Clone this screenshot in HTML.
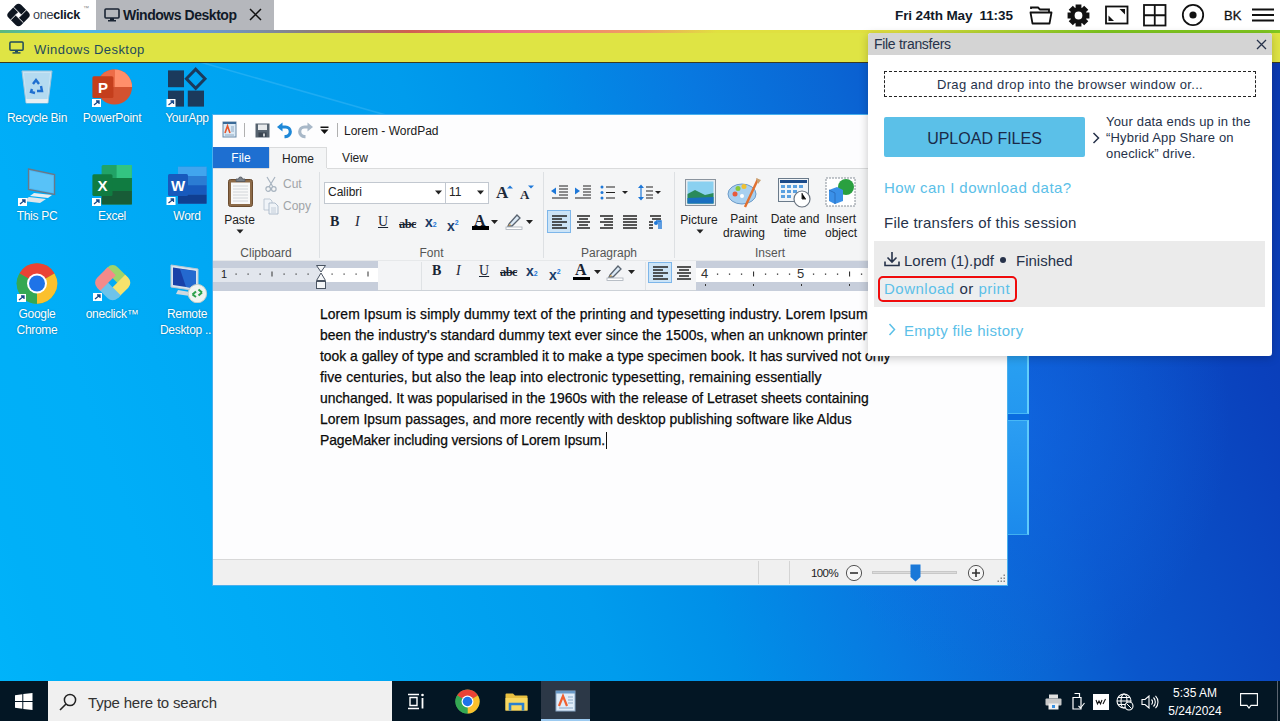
<!DOCTYPE html>
<html><head><meta charset="utf-8">
<style>
*{margin:0;padding:0;box-sizing:border-box}
html,body{width:1280px;height:721px;overflow:hidden}
body{position:relative;font-family:"Liberation Sans",sans-serif;background:#0a7ae0}
.a{position:absolute}
#wall{left:0;top:0;width:1280px;height:721px;background:radial-gradient(ellipse 220px 260px at 1010px 420px,rgba(20,110,235,.55),rgba(20,110,235,0) 100%),linear-gradient(70deg,#00b4fa 0%,#00b0f8 5%,#00aef8 13%,#00a8f4 24%,#009ced 41%,#0090e8 49%,#0878e0 60%,#0a66d4 69%,#0a56cc 75%,#0a4cc4 82%,#0a40bc 90%,#0a38b0 100%)}
#top{left:0;top:0;width:1280px;height:30px;background:#fff}
#stripe{left:0;top:30px;width:1280px;height:3px;background:linear-gradient(90deg,#5cb87a 0%,#4cb8e8 6%,#6a9ad0 16%,#8a8080 24%,#d06050 32%,#f07080 40%,#f0a060 50%,#e0e040 56%,#e0e040 70%,#80c820 86%,#80c820 100%)}
#ybar{left:0;top:33px;width:1280px;height:29px;background:#dfe444}
#yline{left:0;top:62px;width:1280px;height:1px;background:#3a3a20}
.lbl{color:#fff;font-size:12px;text-align:center;text-shadow:0 0 2px rgba(0,0,0,.35);line-height:16px;letter-spacing:-0.3px;margin-top:1px}
</style></head>
<body>
<div id="wall" class="a"></div>
<div id="top" class="a"></div>
<div id="stripe" class="a"></div>
<div id="ybar" class="a"></div>
<div id="yline" class="a"></div>


<!-- DESKTOP ICONS -->
<!-- recycle bin -->
<svg class="a" style="left:20px;top:69px" width="34" height="36" viewBox="0 0 34 36">
 <path d="M2 2H32L28 34H6Z" fill="#c8e4f4" stroke="#9cc4dc" stroke-width="1"/>
 <path d="M4 4H30L27 32H7Z" fill="#b4daf0"/>
 <path d="M6 30H28L27.5 34H6.5Z" fill="#e6eef2"/>
 <g fill="none" stroke="#1f6fd0" stroke-width="2.4"><path d="M13 15L16 11L19 15"/><path d="M21 17L22 22H17"/><path d="M12 20L11 23L15 24"/></g>
</svg>
<div class="a lbl" style="left:0;top:109px;width:74px">Recycle Bin</div>
<!-- powerpoint -->
<svg class="a" style="left:90px;top:68px" width="46" height="42" viewBox="0 0 46 42">
 <circle cx="24.5" cy="19" r="17.6" fill="#d35230"/>
 <path d="M24.5 1.4A17.6 17.6 0 0 1 42.1 19H24.5Z" fill="#ff8f6b"/>
 <path d="M24.5 1.4A17.6 17.6 0 0 0 6.9 19H24.5Z" fill="#ed6c47"/>
 <rect x="2.4" y="8.3" width="21" height="21.8" rx="1.5" fill="#c43e1c"/>
 <text x="12.9" y="25" font-family="Liberation Sans" font-weight="bold" font-size="15" fill="#fff" text-anchor="middle">P</text>
 <rect x="2" y="31" width="9" height="8" fill="#fff"/><path d="M4 37L9 33M6 33H9V36" stroke="#1a4a8a" stroke-width="1.3" fill="none"/>
</svg>
<div class="a lbl" style="left:75px;top:109px;width:74px">PowerPoint</div>
<!-- yourapp -->
<svg class="a" style="left:166px;top:67px" width="42" height="42" viewBox="0 0 42 42">
 <rect x="2" y="3.4" width="16" height="16.8" fill="#1b3a5c"/>
 <rect x="2" y="23.6" width="16" height="16" fill="#1b3a5c"/>
 <rect x="21.8" y="23.6" width="16.2" height="16" fill="#1b3a5c"/>
 <path d="M29.7 2.2L39 11.8L29.7 21.4L20.4 11.8Z" fill="none" stroke="#1b3a5c" stroke-width="3"/>
 <rect x="0.5" y="32" width="9" height="8" fill="#fff"/><path d="M2.5 38L7.5 34M4.5 34H7.5V37" stroke="#1a4a8a" stroke-width="1.3" fill="none"/>
</svg>
<div class="a lbl" style="left:150px;top:109px;width:74px">YourApp</div>
<!-- this pc -->
<svg class="a" style="left:16px;top:167px" width="42" height="40" viewBox="0 0 42 40">
 <path d="M12.5 2L38.6 7.5V27.5L12.5 22.5Z" fill="#4ab8f4" stroke="#6a7888" stroke-width="1.3"/>
 <path d="M14 4L37 8.8V25.8L14 21Z" fill="#58c2f8"/>
 <path d="M18 26L36 28L32 31L14 29Z" fill="#e8eef2"/>
 <path d="M13 30L30 32L24 36L7 34Z" fill="#dfe6ea"/>
 <rect x="2" y="31" width="9" height="8" fill="#fff"/><path d="M4 37L9 33M6 33H9V36" stroke="#1a4a8a" stroke-width="1.3" fill="none"/>
</svg>
<div class="a lbl" style="left:0;top:207px;width:74px">This PC</div>
<!-- excel -->
<svg class="a" style="left:90px;top:164px" width="46" height="44" viewBox="0 0 46 44">
 <rect x="11.6" y="1" width="30.3" height="39.5" rx="1.5" fill="#21a366"/>
 <rect x="26.6" y="1" width="15.3" height="13" fill="#33c481"/>
 <rect x="11.6" y="14" width="30.3" height="13" fill="#107c41"/>
 <rect x="11.6" y="27" width="30.3" height="13.5" fill="#185c37"/>
 <rect x="2.4" y="10.3" width="20.1" height="21.8" rx="1.5" fill="#107c41"/>
 <text x="12.4" y="27" font-family="Liberation Sans" font-weight="bold" font-size="15" fill="#fff" text-anchor="middle">X</text>
 <rect x="2" y="34" width="9" height="8" fill="#fff"/><path d="M4 40L9 36M6 36H9V39" stroke="#1a4a8a" stroke-width="1.3" fill="none"/>
</svg>
<div class="a lbl" style="left:75px;top:207px;width:74px">Excel</div>
<!-- word -->
<svg class="a" style="left:166px;top:165px" width="44" height="42" viewBox="0 0 44 42">
 <rect x="12" y="1.7" width="28.6" height="37" rx="1.5" fill="#2b7cd3"/>
 <rect x="12" y="1.7" width="28.6" height="9.3" fill="#41a5ee"/>
 <rect x="12" y="11" width="28.6" height="9.3" fill="#2b7cd3"/>
 <rect x="12" y="20.3" width="28.6" height="9.3" fill="#185abd"/>
 <rect x="12" y="29.6" width="28.6" height="9.1" fill="#103f91"/>
 <rect x="2" y="9" width="20" height="22" rx="1.5" fill="#185abd"/>
 <text x="12" y="26" font-family="Liberation Sans" font-weight="bold" font-size="15" fill="#fff" text-anchor="middle">W</text>
 <rect x="0.5" y="32" width="9" height="8" fill="#fff"/><path d="M2.5 38L7.5 34M4.5 34H7.5V37" stroke="#1a4a8a" stroke-width="1.3" fill="none"/>
</svg>
<div class="a lbl" style="left:150px;top:207px;width:74px">Word</div>
<!-- chrome -->
<svg class="a" style="left:16px;top:263px" width="42" height="42" viewBox="0 0 42 42">
 <circle cx="21" cy="20.5" r="20.2" fill="#4caf50"/>
 <path d="M21 20.5L3.5 10.4A20.2 20.2 0 0 1 38.5 10.4Z" fill="#ea4335"/>
 <path d="M21 20.5L38.5 10.4A20.2 20.2 0 0 1 21 40.7Z" fill="#fbc02d"/>
 <path d="M21 20.5L21 40.7A20.2 20.2 0 0 1 3.5 10.4Z" fill="#34a853"/>
 <circle cx="21" cy="20.5" r="10" fill="#fff"/>
 <circle cx="21" cy="20.5" r="8" fill="#1e73e8"/>
 <rect x="1" y="31" width="9" height="8" fill="#fff"/><path d="M3 37L8 33M5 33H8V36" stroke="#1a4a8a" stroke-width="1.3" fill="none"/>
</svg>
<div class="a lbl" style="left:0;top:305px;width:74px">Google<br>Chrome</div>
<!-- oneclick colorful -->
<svg class="a" style="left:91px;top:262px" width="44" height="44" viewBox="0 0 44 44">
 <g transform="translate(21.7,20.7) rotate(45)">
  <path d="M-14.5 -3.2V-7.5A7 7 0 0 1 -7.5 -14.5H7.5V-3.2Z" fill="#9fd46a"/>
  <path d="M3.2 -14.5H7.5A7 7 0 0 1 14.5 -7.5V7.5H3.2Z" fill="#f6e26c"/>
  <path d="M14.5 3.2V7.5A7 7 0 0 1 7.5 14.5H-7.5V3.2Z" fill="#6ec3ea"/>
  <path d="M-3.2 14.5H-7.5A7 7 0 0 1 -14.5 7.5V-7.5H-3.2Z" fill="#f48a8a"/>
 </g>
 <rect x="2" y="31" width="9" height="8" fill="#fff"/><path d="M4 37L9 33M6 33H9V36" stroke="#1a4a8a" stroke-width="1.3" fill="none"/>
</svg>
<div class="a lbl" style="left:75px;top:305px;width:74px">oneclick™</div>
<!-- remote desktop -->
<svg class="a" style="left:168px;top:263px" width="42" height="40" viewBox="0 0 42 40">
 <path d="M3 2L30 6V28L3 24Z" fill="#d8e4ee" stroke="#b8c8d4" stroke-width="1"/>
 <path d="M5 4.5L28 8V25.5L5 22Z" fill="#1840a8"/>
 <path d="M12 6L28 8V25.5L18 24Z" fill="#2a7ae0" opacity=".7"/>
 <path d="M10 27L22 29V33L8 31Z" fill="#cfd8de"/>
 <circle cx="29.4" cy="30.6" r="9.2" fill="#f0f4f0" stroke="#c8d0c8"/>
 <path d="M24.5 31.5L28 28.5M24.5 31.5L28 34M34 29.5L30.5 26.5M34 29.5L30.5 32.5" stroke="#2da04a" stroke-width="2"/>
</svg>
<div class="a lbl" style="left:150px;top:305px;width:74px">Remote<br>Desktop ...</div>



<div class="a" style="left:990px;top:340px;width:39px;height:74px;background:linear-gradient(180deg,#2aa2f2,#2498f0);border-right:2px solid #62cefa;border-bottom:1px solid #48b8f6"></div>
<div class="a" style="left:1008px;top:414px;width:21px;height:6px;background:#0a6ce0"></div>
<div class="a" style="left:990px;top:420px;width:39px;height:115px;background:linear-gradient(180deg,#2c9ef2 0%,#2496f0 40%,#1c8aec 100%);border-right:2px solid #5ecafa;border-top:1px solid #48b8f6;border-bottom:1px solid #40b0f0"></div>
<svg class="a" style="left:200px;top:63px" width="220" height="60" viewBox="0 0 220 60"><path d="M0 -1L200 56" stroke="rgba(150,220,255,.2)" stroke-width="1.6"/></svg>
<!-- WORDPAD -->
<div class="a" style="left:212px;top:114px;width:796px;height:472px;background:#fdfdfe;border:1px solid #48b0ee"></div>
<!-- title bar icons -->
<svg class="a" style="left:222px;top:121px" width="15" height="17" viewBox="0 0 15 17">
 <rect x="1" y="1" width="13" height="15" fill="#dceaf6" stroke="#6a8aa8" stroke-width="1"/>
 <rect x="1" y="1" width="13" height="2" fill="#3a6a98"/>
 <path d="M3 12L5.5 5L8 12" stroke="#e8552a" stroke-width="1.6" fill="none"/>
 <path d="M9 6H12M9 8H12M9 10H12M3 14H12" stroke="#7a9ab8" stroke-width="0.8"/>
</svg>
<div class="a" style="left:244px;top:123px;width:1px;height:14px;background:#b0b0b0"></div>
<svg class="a" style="left:255px;top:123px" width="15" height="15" viewBox="0 0 15 15">
 <rect x="0.5" y="0.5" width="14" height="14" fill="#56626e"/>
 <rect x="3" y="1.5" width="9" height="5.5" fill="#e8eaec"/>
 <rect x="3.5" y="9.5" width="8" height="4.5" fill="#3a4450"/><rect x="8" y="10.5" width="2" height="3" fill="#c8ccd0"/>
</svg>
<svg class="a" style="left:277px;top:122px" width="15" height="17" viewBox="0 0 15 17"><path d="M4 5H8.5A4.8 4.8 0 0 1 8.5 14.6H7.5" fill="none" stroke="#1e88d8" stroke-width="3.2"/><path d="M0 5L5.5 0.5V9.5Z" fill="#1e88d8"/></svg>
<svg class="a" style="left:298px;top:122px" width="15" height="17" viewBox="0 0 15 17"><path d="M11 5H6.5A4.8 4.8 0 0 0 6.5 14.6H7.5" fill="none" stroke="#a8b8c8" stroke-width="3.2"/><path d="M15 5L9.5 0.5V9.5Z" fill="#a8b8c8"/></svg>
<svg class="a" style="left:320px;top:126px" width="9" height="9" viewBox="0 0 9 9"><rect x="0.5" y="0.5" width="8" height="1.5" fill="#111"/><path d="M0.5 3.5H8.5L4.5 8Z" fill="#111"/></svg>
<div class="a" style="left:337px;top:123px;width:1px;height:14px;background:#b0b0b0"></div>
<div class="a" style="left:344px;top:124px;font-size:12px;line-height:15px;color:#1a1a1a">Lorem - WordPad</div>
<!-- tabs -->
<div class="a" style="left:213px;top:147px;width:56px;height:23px;background:#1e6fd1;color:#fff;font-size:12px;line-height:23px;text-align:center">File</div>
<div class="a" style="left:269px;top:147px;width:58px;height:24px;background:#f4f5f6;border:1px solid #dadbdc;border-bottom:none;color:#222;font-size:12px;line-height:22px;text-align:center">Home</div>
<div class="a" style="left:327px;top:147px;width:56px;height:23px;color:#222;font-size:12px;line-height:23px;text-align:center">View</div>
<!-- ribbon -->
<div class="a" style="left:213px;top:168px;width:794px;height:93px;background:#f4f5f6;border-top:1px solid #dadbdc"></div>
<div class="a" style="left:327px;top:168px;width:680px;height:1px;background:#dadbdc"></div>
<div class="a" style="left:269px;top:168px;width:58px;height:2px;background:#f4f5f6"></div>
<div class="a" style="left:319px;top:172px;width:1px;height:86px;background:#dde0e3"></div>
<div class="a" style="left:543px;top:172px;width:1px;height:86px;background:#dde0e3"></div>
<div class="a" style="left:674px;top:172px;width:1px;height:86px;background:#dde0e3"></div>
<div class="a" style="left:213px;top:260px;width:794px;height:1px;background:#e6e8ea"></div>
<!-- clipboard -->
<svg class="a" style="left:227px;top:176px" width="27" height="32" viewBox="0 0 27 32">
 <rect x="1.5" y="3.5" width="24" height="27" rx="2" fill="#8c6a48" stroke="#6a4c30" stroke-width="1"/>
 <rect x="4" y="6.5" width="19" height="21.5" fill="#f8f8f8"/>
 <path d="M6 10H21M6 13H21M6 16H21M6 19H21M6 22H21M6 25H21" stroke="#c8ccd0" stroke-width="0.8"/>
 <path d="M9 5.5V3H11.5A2 2 0 0 1 15.5 3H18V5.5Z" fill="#7a8088" stroke="#50565e" stroke-width="0.8"/>
</svg>
<div class="a" style="left:213px;top:213px;width:53px;font-size:12px;line-height:14px;color:#222;text-align:center">Paste</div>
<svg class="a" style="left:236px;top:229px" width="8" height="5" viewBox="0 0 8 5"><path d="M0.5 0.5H7.5L4 4.5Z" fill="#222"/></svg>
<svg class="a" style="left:265px;top:176px" width="12" height="16" viewBox="0 0 12 16"><path d="M2 1L8 11M10 1L4 11" stroke="#a8b4c0" stroke-width="1.2"/><circle cx="3.2" cy="13" r="2.3" fill="none" stroke="#a8b4c0" stroke-width="1.2"/><circle cx="8.8" cy="13" r="2.3" fill="none" stroke="#a8b4c0" stroke-width="1.2"/></svg>
<div class="a" style="left:283px;top:177px;font-size:12px;line-height:14px;color:#a0a4a8">Cut</div>
<svg class="a" style="left:263px;top:198px" width="17" height="17" viewBox="0 0 17 17"><path d="M1 1H7L9 3V12H1Z" fill="#f0f4f8" stroke="#b8c4d0" stroke-width="0.9"/><path d="M6 5H12L15 8V16H6Z" fill="#f0f4f8" stroke="#a8b8c8" stroke-width="0.9"/><path d="M8 10H13M8 12H13M8 14H13" stroke="#b8c4d0" stroke-width="0.8"/></svg>
<div class="a" style="left:283px;top:199px;font-size:12px;line-height:14px;color:#a0a4a8">Copy</div>
<div class="a" style="left:213px;top:246px;width:106px;font-size:12px;line-height:14px;color:#555;text-align:center">Clipboard</div>
<!-- font -->
<div class="a" style="left:324px;top:182px;width:122px;height:22px;background:#fff;border:1px solid #c2c8d0"></div>
<div class="a" style="left:445px;top:182px;width:44px;height:22px;background:#fff;border:1px solid #c2c8d0"></div>
<div class="a" style="left:328px;top:185px;font-size:12px;line-height:15px;color:#222">Calibri</div>
<div class="a" style="left:449px;top:185px;font-size:12px;line-height:15px;color:#222">11</div>
<svg class="a" style="left:435px;top:190px" width="7" height="5" viewBox="0 0 7 5"><path d="M0 0.5H7L3.5 4.5Z" fill="#222"/></svg>
<svg class="a" style="left:477px;top:190px" width="7" height="5" viewBox="0 0 7 5"><path d="M0 0.5H7L3.5 4.5Z" fill="#222"/></svg>
<div class="a" style="left:496px;top:183px;font-family:'Liberation Serif',serif;font-weight:bold;font-size:17px;line-height:20px;color:#1e2a3a">A</div>
<svg class="a" style="left:507px;top:185px" width="6" height="4" viewBox="0 0 6 4"><path d="M0 3.5L3 0.5L6 3.5Z" fill="#1e78d8"/></svg>
<div class="a" style="left:520px;top:187px;font-family:'Liberation Serif',serif;font-weight:bold;font-size:13px;line-height:16px;color:#1e2a3a">A</div>
<svg class="a" style="left:528px;top:185px" width="6" height="4" viewBox="0 0 6 4"><path d="M0 0.5H6L3 3.5Z" fill="#1e78d8"/></svg>
<div class="a" style="left:330px;top:214px;font-family:'Liberation Serif',serif;font-weight:bold;font-size:14px;line-height:16px;color:#1a2433">B</div>
<div class="a" style="left:355px;top:214px;font-family:'Liberation Serif',serif;font-style:italic;font-size:14px;line-height:16px;color:#1a2433">I</div>
<div class="a" style="left:378px;top:214px;font-family:'Liberation Serif',serif;font-size:14px;line-height:16px;color:#1a2433;text-decoration:underline">U</div>
<div class="a" style="left:399px;top:217px;font-family:'Liberation Serif',serif;font-weight:bold;font-size:12.5px;line-height:14px;color:#1a2433;text-decoration:line-through;letter-spacing:-0.6px">abc</div>
<div class="a" style="left:425px;top:215px;font-size:14px;line-height:15px;font-weight:bold;color:#1a3a66">x<span style="font-size:7px;color:#1e78d8">2</span></div>
<div class="a" style="left:447px;top:215px;font-size:14px;line-height:15px;font-weight:bold;color:#1a3a66">x<span style="font-size:7px;color:#1e78d8;vertical-align:6px">2</span></div>
<div class="a" style="left:474px;top:213px;font-family:'Liberation Serif',serif;font-weight:bold;font-size:16px;line-height:16px;color:#1a2433">A</div>
<div class="a" style="left:472px;top:226px;width:17px;height:3.5px;background:#000"></div>
<svg class="a" style="left:491px;top:220px" width="7" height="4" viewBox="0 0 7 4"><path d="M0 0H7L3.5 4Z" fill="#222"/></svg>
<svg class="a" style="left:505px;top:213px" width="18" height="17" viewBox="0 0 18 17"><path d="M4 11L12 2L15 5L7 13L3 13Z" fill="#dceaf6" stroke="#5a6470" stroke-width="1.3"/><path d="M3 13L5 11L6 12Z" fill="#e8a030"/><rect x="1" y="14" width="16" height="2.5" fill="#fff" stroke="#a8b0b8" stroke-width="0.8"/></svg>
<svg class="a" style="left:526px;top:220px" width="7" height="4" viewBox="0 0 7 4"><path d="M0 0H7L3.5 4Z" fill="#222"/></svg>
<div class="a" style="left:320px;top:246px;width:223px;font-size:12px;line-height:14px;color:#555;text-align:center">Font</div>
<!-- paragraph -->
<svg class="a" style="left:550px;top:184px" width="120" height="17" viewBox="0 0 120 17">
 <g stroke="#222" stroke-width="1.2"><path d="M9 2H18M9 5H18M9 8H18M9 11H18M2 14H18"/></g><path d="M1 7L6 3.5V10.5Z" fill="#1e78d8"/>
 <g stroke="#222" stroke-width="1.2"><path d="M33 2H41M33 5H41M33 8H41M33 11H41M25 14H41"/></g><path d="M30 7L25 3.5V10.5Z" fill="#1e78d8"/>
 <g fill="#1e78d8"><circle cx="52" cy="3" r="1.5"/><circle cx="52" cy="8.5" r="1.5"/><circle cx="52" cy="14" r="1.5"/></g>
 <g stroke="#222" stroke-width="1.2"><path d="M56 3H65M56 8.5H65M56 14H65"/></g><path d="M72 7H78L75 10Z" fill="#222"/>
 <path d="M91 0.5L94 4H88Z M91 16.5L94 13H88Z" fill="#1e78d8"/><path d="M91 3V14" stroke="#1e78d8" stroke-width="1.2"/>
 <g stroke="#222" stroke-width="1.2"><path d="M96 3H103M96 7H103M96 11H103M96 14H103"/></g><path d="M105 7H111L108 10Z" fill="#222"/>
</svg>
<div class="a" style="left:547px;top:210px;width:24px;height:23px;background:#cce4f7;border:1px solid #7db6ea"></div>
<svg class="a" style="left:550px;top:214px" width="115" height="15" viewBox="0 0 115 15">
 <g stroke="#222" stroke-width="1.3">
  <path d="M2 2H17M2 5H12M2 8H17M2 11H12M2 14H17"/>
  <path d="M27 2H40M29 5H38M27 8H40M29 11H38M27 14H40"/>
  <path d="M50 2H63M54 5H63M50 8H63M54 11H63M50 14H63"/>
  <path d="M73 2H87M73 5H87M73 8H87M73 11H87M73 14H87"/>
  <path d="M100 2H111M102 5H111M99 8H103M99 11H103M99 14H103"/>
 </g>
 <path d="M106 7H111V15M109 7V15" stroke="#1e78d8" stroke-width="1.4" fill="none"/><circle cx="106" cy="9" r="2" fill="#1e78d8"/>
</svg>
<div class="a" style="left:544px;top:246px;width:130px;font-size:12px;line-height:14px;color:#555;text-align:center">Paragraph</div>
<!-- insert -->
<svg class="a" style="left:685px;top:179px" width="31" height="27" viewBox="0 0 31 27">
 <rect x="0.5" y="0.5" width="30" height="26" fill="#e8ecf0" stroke="#8a949e"/>
 <rect x="2.5" y="2.5" width="26" height="22" fill="#8ad0f0"/>
 <path d="M2.5 15L10 11L20 16L28.5 14V24.5H2.5Z" fill="#2a8a5a"/>
 <path d="M2.5 19L28.5 18V24.5H2.5Z" fill="#1a70c0"/>
</svg>
<svg class="a" style="left:727px;top:177px" width="35" height="32" viewBox="0 0 35 32">
 <ellipse cx="15" cy="17" rx="14" ry="10" fill="#a8d0f0" stroke="#6a9ac8"/>
 <circle cx="8" cy="17" r="2.5" fill="#e85a3a"/><circle cx="11" cy="11.5" r="2.5" fill="#8ac838"/><circle cx="17" cy="9.5" r="2.5" fill="#f0c030"/><circle cx="15" cy="19" r="2" fill="#fff"/>
 <path d="M31 2L18 30" stroke="#e07030" stroke-width="2.4"/><path d="M29 1L34 3L31 7Z" fill="#c8a070"/>
</svg>
<svg class="a" style="left:778px;top:178px" width="33" height="30" viewBox="0 0 33 30">
 <rect x="0.5" y="0.5" width="30" height="23" fill="#f0f4f8" stroke="#6a7a8a"/>
 <rect x="2" y="2" width="27" height="3" fill="#1a4a8a"/>
 <g fill="#5aa0e0"><rect x="3" y="7" width="4" height="3"/><rect x="9" y="7" width="4" height="3"/><rect x="15" y="7" width="4" height="3"/><rect x="21" y="7" width="4" height="3"/><rect x="3" y="12" width="4" height="3"/><rect x="9" y="12" width="4" height="3"/><rect x="15" y="12" width="4" height="3"/><rect x="3" y="17" width="4" height="3"/><rect x="9" y="17" width="4" height="3"/></g>
 <circle cx="24" cy="21" r="8" fill="#fff" stroke="#6a7480" stroke-width="1.2"/><path d="M24 15V21H28" stroke="#333" stroke-width="1"/>
</svg>
<svg class="a" style="left:825px;top:177px" width="32" height="30" viewBox="0 0 32 30">
 <rect x="1" y="1" width="29" height="28" fill="#fff" stroke="#6a7480" stroke-width="0.8" stroke-dasharray="2,1"/>
 <circle cx="21" cy="10" r="8" fill="#2aa040"/>
 <path d="M4 13L12 10L18 13V24L10 27L4 24Z" fill="#3a90e8"/><path d="M4 13L10 16V27" stroke="#2a70c0" fill="none"/>
</svg>
<div class="a" style="left:676px;top:213px;width:46px;font-size:12px;line-height:14px;color:#222;text-align:center">Picture</div>
<svg class="a" style="left:696px;top:229px" width="8" height="5" viewBox="0 0 8 5"><path d="M0.5 0.5H7.5L4 4.5Z" fill="#222"/></svg>
<div class="a" style="left:719px;top:213px;width:50px;font-size:12px;line-height:13.5px;color:#222;text-align:center">Paint<br>drawing</div>
<div class="a" style="left:767px;top:213px;width:56px;font-size:12px;line-height:13.5px;color:#222;text-align:center">Date and<br>time</div>
<div class="a" style="left:818px;top:213px;width:46px;font-size:12px;line-height:13.5px;color:#222;text-align:center">Insert<br>object</div>
<div class="a" style="left:675px;top:246px;width:190px;font-size:12px;line-height:14px;color:#555;text-align:center">Insert</div>
<!-- ruler -->
<div class="a" style="left:213px;top:261px;width:655px;height:30px;background:#c7cedb"></div>
<div class="a" style="left:213px;top:268px;width:107px;height:14px;background:#e2e6ed"></div>
<div class="a" style="left:320px;top:268px;width:548px;height:14px;background:#fff"></div>


<!-- ruler ticks left -->
<div class="a" style="left:221px;top:267px;font-size:11px;line-height:14px;color:#222">1</div>
<svg class="a" style="left:213px;top:261px" width="655" height="30" viewBox="0 0 655 30">
 <g fill="#333">
  <rect x="22.5" y="12.5" width="1.2" height="1.2"/><rect x="34.5" y="12.5" width="1.2" height="1.2"/><rect x="46.5" y="12.5" width="1.2" height="1.2"/>
  <rect x="58.5" y="10.5" width="1" height="5"/>
  <rect x="70.5" y="12.5" width="1.2" height="1.2"/><rect x="82.5" y="12.5" width="1.2" height="1.2"/><rect x="94.5" y="12.5" width="1.2" height="1.2"/>
  <rect x="118.5" y="12.5" width="1.2" height="1.2"/><rect x="130.5" y="12.5" width="1.2" height="1.2"/><rect x="142.5" y="12.5" width="1.2" height="1.2"/>
  <rect x="154.5" y="10.5" width="1" height="5"/>
 </g>
 <g fill="#f4f6f8" stroke="#4a5462" stroke-width="1">
  <path d="M103.5 4.5H112.5L108 11Z"/><path d="M103.5 19.5L108 12L112.5 19.5Z"/><rect x="103.5" y="20.5" width="9" height="7"/>
 </g>
</svg>
<!-- mini toolbar -->
<div class="a" style="left:378px;top:261px;width:318px;height:30px;background:#f3f4f6;border-bottom:1px solid #cdd2d8"></div>
<div class="a" style="left:421px;top:262px;width:1px;height:28px;background:#dfe2e5"></div>
<div class="a" style="left:645px;top:262px;width:1px;height:28px;background:#dfe2e5"></div>
<div class="a" style="left:432px;top:263px;font-family:'Liberation Serif',serif;font-weight:bold;font-size:14px;line-height:16px;color:#1a2433">B</div>
<div class="a" style="left:456px;top:263px;font-family:'Liberation Serif',serif;font-style:italic;font-size:14px;line-height:16px;color:#1a2433">I</div>
<div class="a" style="left:479px;top:263px;font-family:'Liberation Serif',serif;font-size:14px;line-height:16px;color:#1a2433;text-decoration:underline">U</div>
<div class="a" style="left:500px;top:265px;font-family:'Liberation Serif',serif;font-weight:bold;font-size:12.5px;line-height:14px;color:#1a2433;text-decoration:line-through;letter-spacing:-0.6px">abc</div>
<div class="a" style="left:526px;top:264px;font-size:14px;line-height:15px;font-weight:bold;color:#1a3a66">x<span style="font-size:7px;color:#1e78d8">2</span></div>
<div class="a" style="left:549px;top:264px;font-size:14px;line-height:15px;font-weight:bold;color:#1a3a66">x<span style="font-size:7px;color:#1e78d8;vertical-align:6px">2</span></div>
<div class="a" style="left:575px;top:262px;font-family:'Liberation Serif',serif;font-weight:bold;font-size:16px;line-height:16px;color:#1a2433">A</div>
<div class="a" style="left:573px;top:277px;width:17px;height:3px;background:#000"></div>
<svg class="a" style="left:594px;top:270px" width="7" height="4" viewBox="0 0 7 4"><path d="M0 0H7L3.5 4Z" fill="#222"/></svg>
<svg class="a" style="left:606px;top:264px" width="18" height="17" viewBox="0 0 18 17"><path d="M4 11L12 2L15 5L7 13L3 13Z" fill="#dceaf6" stroke="#5a6470" stroke-width="1.3"/><path d="M3 13L5 11L6 12Z" fill="#e8a030"/><rect x="1" y="14" width="16" height="2.5" fill="#fff" stroke="#a8b0b8" stroke-width="0.8"/></svg>
<svg class="a" style="left:628px;top:270px" width="7" height="4" viewBox="0 0 7 4"><path d="M0 0H7L3.5 4Z" fill="#222"/></svg>
<div class="a" style="left:648px;top:262px;width:24px;height:21px;background:#cce4f7;border:1px solid #7db6ea"></div>
<svg class="a" style="left:651px;top:265px" width="42" height="15" viewBox="0 0 42 15">
 <g stroke="#222" stroke-width="1.3"><path d="M2 2H17M2 5H12M2 8H17M2 11H12M2 14H17"/><path d="M26 2H40M28 5H38M26 8H40M28 11H38M26 14H40"/></g>
</svg>
<!-- ruler right -->
<svg class="a" style="left:696px;top:261px" width="172" height="30" viewBox="0 0 172 30"><g fill="#333"><rect x="20.9" y="12.5" width="1.3" height="1.3"/><rect x="32.9" y="12.5" width="1.3" height="1.3"/><rect x="44.9" y="12.5" width="1.3" height="1.3"/><rect x="68.9" y="12.5" width="1.3" height="1.3"/><rect x="80.9" y="12.5" width="1.3" height="1.3"/><rect x="92.9" y="12.5" width="1.3" height="1.3"/><rect x="116.9" y="12.5" width="1.3" height="1.3"/><rect x="128.9" y="12.5" width="1.3" height="1.3"/><rect x="140.9" y="12.5" width="1.3" height="1.3"/><rect x="164.9" y="12.5" width="1.3" height="1.3"/><rect x="57.0" y="10.5" width="1.1" height="5"/><rect x="153.0" y="10.5" width="1.1" height="5"/><rect x="9.0" y="23" width="1" height="2"/><rect x="57.0" y="23" width="1" height="2"/><rect x="105.0" y="23" width="1" height="2"/><rect x="153.0" y="23" width="1" height="2"/></g></svg>
<div class="a" style="left:701px;top:267px;font-size:13px;line-height:14px;color:#333">4</div>
<div class="a" style="left:797px;top:267px;font-size:13px;line-height:14px;color:#333">5</div>
<!-- document -->
<div class="a" id="doc" style="left:320px;top:304px;font-size:13.9px;line-height:21px;color:#0a0a0a;white-space:pre;-webkit-text-stroke:0.25px #0a0a0a"><div style="letter-spacing:0.086px">Lorem Ipsum is simply dummy text of the printing and typesetting industry. Lorem Ipsum has</div><div style="letter-spacing:0.028px">been the industry&#39;s standard dummy text ever since the 1500s, when an unknown printer</div><div style="letter-spacing:-0.010px">took a galley of type and scrambled it to make a type specimen book. It has survived not only</div><div style="letter-spacing:0.144px">five centuries, but also the leap into electronic typesetting, remaining essentially</div><div style="letter-spacing:-0.022px">unchanged. It was popularised in the 1960s with the release of Letraset sheets containing</div><div style="letter-spacing:0.025px">Lorem Ipsum passages, and more recently with desktop publishing software like Aldus</div><div style="letter-spacing:-0.103px">PageMaker including versions of Lorem Ipsum.<span style="display:inline-block;width:1px;height:17px;background:#111;vertical-align:-4px;margin-left:1px"></span></div></div>
<!-- status bar -->
<div class="a" style="left:213px;top:559px;width:794px;height:26px;background:#f0f0f0;border-top:1px solid #d8d8d8"></div>
<div class="a" style="left:758px;top:561px;width:1px;height:23px;background:#d4d4d4"></div>
<div class="a" style="left:789px;top:561px;width:1px;height:23px;background:#d4d4d4"></div>
<div class="a" style="left:811px;top:566px;font-size:11.5px;line-height:14px;color:#222;letter-spacing:-0.6px">100%</div>
<svg class="a" style="left:845px;top:564px" width="18" height="18" viewBox="0 0 18 18"><circle cx="9" cy="9" r="7.6" fill="#f6f6f6" stroke="#555" stroke-width="1"/><path d="M5 9H13" stroke="#333" stroke-width="1.6"/></svg>
<div class="a" style="left:872px;top:571px;width:85px;height:3px;background:#dcdcdc;border:1px solid #c8c8c8"></div>
<svg class="a" style="left:910px;top:564px" width="11" height="18" viewBox="0 0 11 18"><path d="M0.5 0.5H10.5V13L5.5 17.5L0.5 13Z" fill="#1a78d8"/></svg>
<svg class="a" style="left:967px;top:564px" width="18" height="18" viewBox="0 0 18 18"><circle cx="9" cy="9" r="7.6" fill="#f6f6f6" stroke="#555" stroke-width="1"/><path d="M5 9H13M9 5V13" stroke="#333" stroke-width="1.6"/></svg>
<svg class="a" style="left:997px;top:574px" width="9" height="9" viewBox="0 0 9 9"><g fill="#888"><rect x="6.5" y="0.5" width="1.5" height="1.5"/><rect x="3.5" y="3.5" width="1.5" height="1.5"/><rect x="6.5" y="3.5" width="1.5" height="1.5"/><rect x="0.5" y="6.5" width="1.5" height="1.5"/><rect x="3.5" y="6.5" width="1.5" height="1.5"/><rect x="6.5" y="6.5" width="1.5" height="1.5"/></g></svg>


<!-- PANEL -->
<div class="a" style="left:868px;top:33px;width:404px;height:323px;background:#fff;border-radius:3px;box-shadow:0 2px 10px rgba(0,0,0,.22);overflow:hidden">
 <div class="a" style="left:0;top:0;width:404px;height:22px;background:#d4d4d4"></div>
</div>
<div class="a" style="left:874px;top:36px;font-size:14px;line-height:16px;color:#26324a;letter-spacing:-0.3px">File transfers</div>
<svg class="a" style="left:1256px;top:39px" width="11" height="11" viewBox="0 0 11 11"><path d="M1 1L10 10M10 1L1 10" stroke="#26324a" stroke-width="1.3"/></svg>
<div class="a" style="left:884px;top:71px;width:372px;height:26px;border:1.5px dashed #222"></div>
<div class="a" style="left:884px;top:77px;width:372px;text-align:center;font-size:13px;line-height:16px;color:#26324a;letter-spacing:0.34px">Drag and drop into the browser window or...</div>
<div class="a" style="left:884px;top:117px;width:201px;height:40px;background:#5bc0e8;border-radius:2px;color:#1a2a48;font-size:16px;line-height:44px;text-align:center">UPLOAD FILES</div>
<svg class="a" style="left:1092px;top:132px" width="8" height="12" viewBox="0 0 8 12"><path d="M1.5 1L6.5 6L1.5 11" fill="none" stroke="#26324a" stroke-width="1.5"/></svg>
<div class="a" style="left:1106px;top:114px;font-size:13px;line-height:16px;color:#26324a;letter-spacing:0.17px">Your data ends up in the<br>“Hybrid App Share on<br>oneclick” drive.</div>
<div class="a" style="left:884px;top:179px;font-size:15px;line-height:18px;color:#5bc0e8;letter-spacing:0.45px">How can I download data?</div>
<div class="a" style="left:884px;top:214px;font-size:15px;line-height:18px;color:#26324a;letter-spacing:0.22px">File transfers of this session</div>
<div class="a" style="left:874px;top:241px;width:391px;height:66px;background:#ebebeb"></div>
<svg class="a" style="left:884px;top:251px" width="16" height="16" viewBox="0 0 16 16"><path d="M8 1V11M3.5 6.5L8 11L12.5 6.5" fill="none" stroke="#26324a" stroke-width="1.6"/><path d="M1 10.5V14.5H15V10.5" fill="none" stroke="#26324a" stroke-width="1.6"/></svg>
<div class="a" style="left:904px;top:252px;font-size:15px;line-height:18px;color:#26324a;white-space:pre">Lorem (1).pdf</div>
<div class="a" style="left:1000px;top:257px;width:6px;height:6px;border-radius:3px;background:#26324a"></div>
<div class="a" style="left:1016px;top:252px;font-size:15px;line-height:18px;color:#26324a">Finished</div>
<div class="a" style="left:878px;top:276px;width:139px;height:26px;border:2.6px solid #f00c0c;border-radius:5px;background:#eceeef;box-shadow:0 0 0 1px #e4f4f8"></div>
<div class="a" style="left:884px;top:280px;font-size:15px;line-height:18px;color:#5bc0e8;white-space:pre;letter-spacing:0.5px">Download <span style="color:#26324a">or</span> print</div>
<svg class="a" style="left:888px;top:323px" width="8" height="13" viewBox="0 0 8 13"><path d="M1.5 1L6.5 6.5L1.5 12" fill="none" stroke="#5bc0e8" stroke-width="1.5"/></svg>
<div class="a" style="left:904px;top:322px;font-size:15px;line-height:18px;color:#5bc0e8;letter-spacing:0.29px">Empty file history</div>
<!-- Win logo panes -->

<!-- TASKBAR -->
<div class="a" style="left:0;top:681px;width:1280px;height:40px;background:#031624"></div>
<svg class="a" style="left:15px;top:693px" width="18" height="17" viewBox="0 0 18 17"><path d="M0 2.3L7.3 1.3V8H0Z M8.3 1.1L17.5 0V8H8.3Z M0 9H7.3V15.7L0 14.7Z M8.3 9H17.5V17L8.3 15.9Z" fill="#fff"/></svg>
<div class="a" style="left:48px;top:681px;width:344px;height:40px;background:#f0f0f0"></div>
<svg class="a" style="left:59px;top:693px" width="18" height="18" viewBox="0 0 18 18"><circle cx="11" cy="7" r="5.6" fill="none" stroke="#222" stroke-width="1.5"/><path d="M7 11L1 17" stroke="#222" stroke-width="1.6"/></svg>
<div class="a" style="left:88px;top:694px;font-size:15px;line-height:18px;color:#333;letter-spacing:-0.2px">Type here to search</div>
<svg class="a" style="left:407px;top:693px" width="19" height="17" viewBox="0 0 19 17"><g fill="none" stroke="#fff" stroke-width="1.4"><path d="M1 1.5H12M1 15.5H12M3 4.5H10V12.5H3Z"/></g><path d="M15.5 5V15.5" stroke="#fff" stroke-width="1.8"/><circle cx="15.5" cy="2" r="1.3" fill="#fff"/></svg>
<svg class="a" style="left:455px;top:689px" width="25" height="25" viewBox="0 0 42 42">
 <circle cx="21" cy="21" r="20.2" fill="#4caf50"/>
 <path d="M21 21L3.5 10.9A20.2 20.2 0 0 1 38.5 10.9Z" fill="#ea4335"/>
 <path d="M21 21L38.5 10.9A20.2 20.2 0 0 1 21 41.2Z" fill="#fbc02d"/>
 <path d="M21 21L21 41.2A20.2 20.2 0 0 1 3.5 10.9Z" fill="#34a853"/>
 <circle cx="21" cy="21" r="10" fill="#fff"/><circle cx="21" cy="21" r="8" fill="#1e73e8"/>
</svg>
<svg class="a" style="left:505px;top:692px" width="23" height="19" viewBox="0 0 23 19"><path d="M0.5 2.5A1 1 0 0 1 1.5 1.5H8L10 3.5H21.5A1 1 0 0 1 22.5 4.5V18.5H0.5Z" fill="#e8c040"/><rect x="0.5" y="6" width="22" height="12.5" fill="#f8d860"/><path d="M5 18.5V12H18V18.5" fill="none" stroke="#2a80d0" stroke-width="2.6"/></svg>
<div class="a" style="left:541px;top:681px;width:49px;height:40px;background:#2c3847"></div>
<div class="a" style="left:541px;top:719px;width:49px;height:2px;background:#9ccaf0"></div>
<svg class="a" style="left:555px;top:690px" width="21" height="22" viewBox="0 0 21 22">
 <rect x="1" y="1" width="19" height="20" fill="#e0ecf8" stroke="#8aa8c8" stroke-width="1"/>
 <rect x="1" y="1" width="19" height="2.5" fill="#6a9ac8"/>
 <path d="M4 16L8 6L12 16" stroke="#f06030" stroke-width="2.2" fill="none"/>
 <path d="M13 7H18M13 10H18M13 13H18M4 18H18" stroke="#8aa8c8" stroke-width="1"/>
</svg>
<!-- tray -->
<svg class="a" style="left:1045px;top:694px" width="17" height="16" viewBox="0 0 17 16"><rect x="4" y="0.5" width="9" height="4" fill="#e0e0e0"/><rect x="0.5" y="4.5" width="16" height="7" rx="1" fill="#c8c8c8"/><rect x="3.5" y="9.5" width="10" height="6" fill="#f0f0f0"/><rect x="7" y="11" width="3" height="3" fill="#3a90e0"/></svg>
<svg class="a" style="left:1071px;top:693px" width="14" height="17" viewBox="0 0 14 17"><path d="M3.5 0.5H8.5V4.5M2 4.5H10V16H2Z" fill="none" stroke="#fff" stroke-width="1.2"/><path d="M7.5 13L9.5 15L13.5 10" fill="none" stroke="#fff" stroke-width="1.1"/></svg>
<svg class="a" style="left:1093px;top:694px" width="16" height="16" viewBox="0 0 16 16"><rect x="0" y="0" width="16" height="16" fill="#fff"/><path d="M3 6L4.5 10L6 7L7.5 10L9 6M10 10L12.5 5" fill="none" stroke="#111" stroke-width="1.1"/></svg>
<svg class="a" style="left:1116px;top:693px" width="18" height="18" viewBox="0 0 18 18"><g fill="none" stroke="#fff" stroke-width="1.1"><circle cx="8" cy="8" r="7"/><ellipse cx="8" cy="8" rx="3" ry="7"/><path d="M1 8H15M2 4.5H14M2 11.5H14"/></g><circle cx="13" cy="13" r="4" fill="#031624" stroke="#fff" stroke-width="1.1"/><path d="M10.5 10.5L15.5 15.5" stroke="#fff" stroke-width="1"/></svg>
<svg class="a" style="left:1141px;top:695px" width="18" height="14" viewBox="0 0 18 14"><path d="M1 4.5H4L8 1V13L4 9.5H1Z" fill="none" stroke="#fff" stroke-width="1.1"/><path d="M10.5 4.5A3.5 3.5 0 0 1 10.5 9.5M12.5 2.5A6.5 6.5 0 0 1 12.5 11.5M14.5 0.8A9 9 0 0 1 14.5 13.2" fill="none" stroke="#fff" stroke-width="1.1"/></svg>
<div class="a" style="left:1160px;top:685px;width:70px;text-align:center;font-size:12px;line-height:17.5px;color:#fff">5:35 AM<br>5/24/2024</div>
<svg class="a" style="left:1240px;top:693px" width="18" height="17" viewBox="0 0 18 17"><path d="M0.6 0.6H17.4V12.4H11L9 15L7 12.4H0.6Z" fill="none" stroke="#fff" stroke-width="1.1"/></svg>
<div class="a" style="left:1277px;top:681px;width:1px;height:40px;background:#5a6470"></div>

<!-- TOP BAR -->
<svg class="a" style="left:6px;top:3px" width="25" height="24" viewBox="0 0 25 24">
 <g transform="translate(12.5,12) rotate(45)">
  <rect x="-9" y="-9" width="18" height="18" rx="4" fill="#0d1520"/>
  <line x1="-9" y1="-2" x2="2" y2="-2" stroke="#fff" stroke-width="0.9"/>
  <line x1="2" y1="-9" x2="2" y2="2" stroke="#fff" stroke-width="0.9"/>
  <line x1="9" y1="2" x2="-2" y2="2" stroke="#fff" stroke-width="0.9"/>
  <line x1="-2" y1="9" x2="-2" y2="-2" stroke="#fff" stroke-width="0.9"/>
  <rect x="-2" y="-2" width="4" height="4" fill="#fff"/>
 </g>
</svg>
<div class="a" style="left:33px;top:8px;font-size:12.6px;line-height:15px;color:#0e1624;letter-spacing:-0.25px"><span style="color:#3a4250">one</span><b>click</b></div>
<div class="a" style="left:83px;top:4px;font-size:6px;line-height:8px;color:#888">™</div>
<div class="a" style="left:96px;top:0;width:178px;height:30px;background:#b5b7bc"></div>
<svg class="a" style="left:104px;top:8px" width="16" height="14" viewBox="0 0 16 14"><rect x="1" y="1" width="14" height="9" rx="1" fill="none" stroke="#1a2433" stroke-width="1.6"/><rect x="6" y="10" width="4" height="2" fill="#1a2433"/><rect x="4" y="12" width="8" height="1.5" fill="#1a2433"/></svg>
<div class="a" style="left:123px;top:6px;font-size:14px;line-height:18px;font-weight:bold;color:#111a28;letter-spacing:-0.46px">Windows Desktop</div>
<svg class="a" style="left:249px;top:8px" width="13" height="13" viewBox="0 0 13 13"><path d="M1 1L12 12M12 1L1 12" stroke="#111" stroke-width="1.5"/></svg>
<div class="a" style="left:895px;top:7px;font-size:13.5px;line-height:17px;font-weight:bold;color:#111a28;white-space:pre;letter-spacing:-0.12px">Fri 24th May  11:35</div>
<!-- folder -->
<svg class="a" style="left:1029px;top:5px" width="24" height="20" viewBox="0 0 24 20"><path d="M2 4V2.5H9L11 4.5H20V7" fill="none" stroke="#111" stroke-width="1.8"/><path d="M1.5 7.5H22.5L20.5 18.5H3.5Z" fill="none" stroke="#111" stroke-width="1.8" stroke-linejoin="round"/></svg>
<!-- gear -->
<svg class="a" style="left:1067px;top:3.5px" width="23" height="23" viewBox="0 0 23 23"><path fill="#111" fill-rule="evenodd" d="M19.27 8.58L22.42 8.59L22.42 14.41L19.27 14.42L19.06 14.93L21.28 17.17L17.17 21.28L14.93 19.06L14.42 19.27L14.41 22.42L8.59 22.42L8.58 19.27L8.07 19.06L5.83 21.28L1.72 17.17L3.94 14.93L3.73 14.42L0.58 14.41L0.58 8.59L3.73 8.58L3.94 8.07L1.72 5.83L5.83 1.72L8.07 3.94L8.58 3.73L8.59 0.58L14.41 0.58L14.42 3.73L14.93 3.94L17.17 1.72L21.28 5.83L19.06 8.07Z M15.40 11.50A3.9 3.9 0 1 0 7.60 11.50A3.9 3.9 0 1 0 15.40 11.50Z"/></svg>
<!-- resize -->
<svg class="a" style="left:1105px;top:5px" width="24" height="20" viewBox="0 0 24 20"><rect x="1" y="1.5" width="21.5" height="17" fill="none" stroke="#111" stroke-width="1.8"/><path d="M14.5 4H20V9.5Z" fill="#111"/><path d="M3.5 10.5V16H9Z" fill="#111"/></svg>
<!-- grid -->
<svg class="a" style="left:1143px;top:4px" width="24" height="23" viewBox="0 0 24 23"><rect x="1" y="1" width="21.5" height="20.5" fill="none" stroke="#111" stroke-width="1.8"/><path d="M11.75 1V21.5M1 11.25H22.5" stroke="#111" stroke-width="1.8"/></svg>
<!-- record -->
<svg class="a" style="left:1181px;top:3px" width="24" height="24" viewBox="0 0 24 24"><circle cx="12" cy="12" r="10.2" fill="none" stroke="#111" stroke-width="1.8"/><circle cx="12" cy="12" r="3.6" fill="#111"/></svg>
<div class="a" style="left:1224px;top:7px;font-size:13px;line-height:17px;color:#111;-webkit-text-stroke:0.3px #111">BK</div>
<svg class="a" style="left:1252px;top:7px" width="22" height="16" viewBox="0 0 22 16"><path d="M0 2.5H22M0 8H22M0 13.5H22" stroke="#111" stroke-width="2"/></svg>
<!-- YELLOW BAR -->
<svg class="a" style="left:9px;top:41px" width="15" height="13" viewBox="0 0 15 13"><rect x="0.9" y="0.9" width="13.2" height="8.4" rx="1" fill="none" stroke="#1e4a5c" stroke-width="1.5"/><rect x="6" y="9.5" width="3" height="1.8" fill="#1e4a5c"/><rect x="3.5" y="11.2" width="8" height="1.4" fill="#1e4a5c"/></svg>
<div class="a" style="left:34px;top:42px;font-size:13px;line-height:16px;color:#1e4a5c;letter-spacing:0.45px">Windows Desktop</div>
</body></html>
